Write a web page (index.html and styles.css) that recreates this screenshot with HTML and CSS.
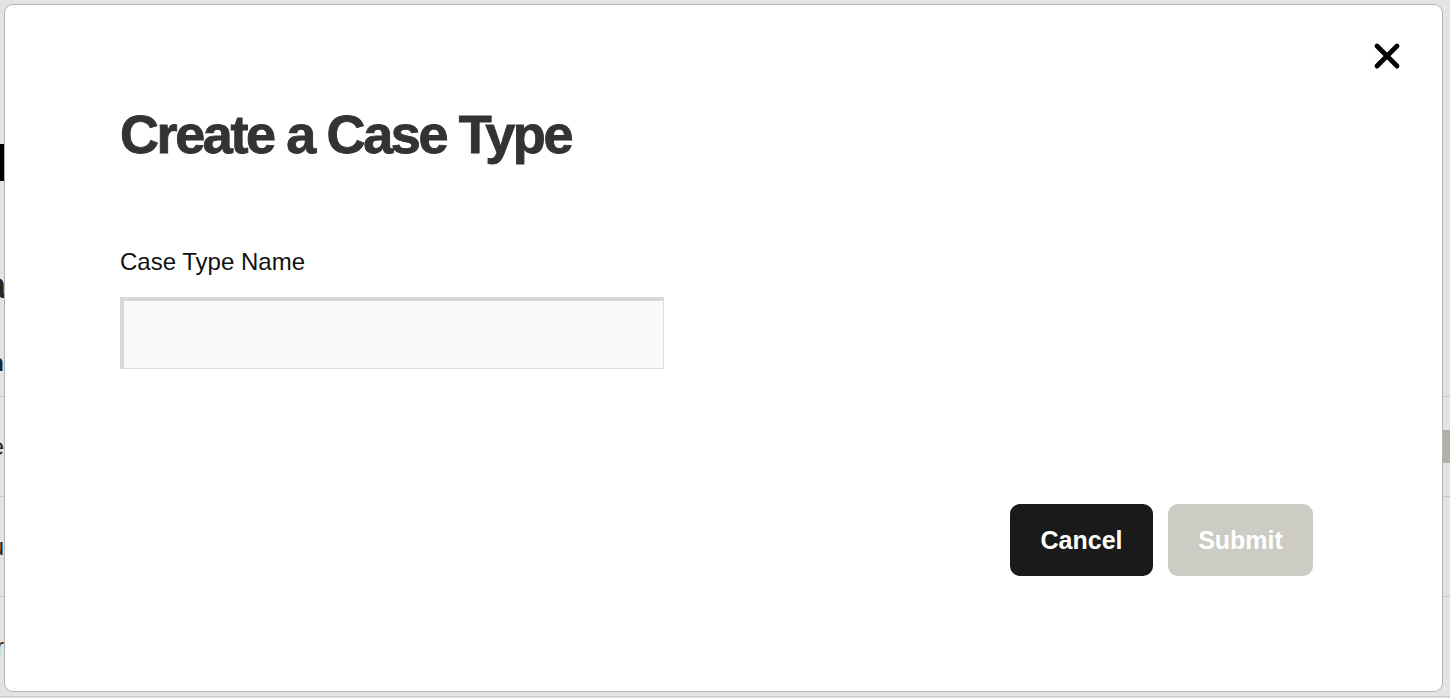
FILE: index.html
```html
<!DOCTYPE html>
<html lang="en">
<head>
<meta charset="utf-8">
<title>Create a Case Type</title>
<link rel="stylesheet" href="styles.css">
</head>
<body>
<div class="page">
  <div class="page-head"><span class="page-bar"></span></div>
  <div class="page-sub">Data</div>
  <div class="page-table">
    <div class="trow thead"><span class="tcell">Column</span></div>
    <div class="trow"><span class="tcell">Case</span><span class="thumb"></span></div>
    <div class="trow"><span class="tcell">Menu</span></div>
    <div class="trow"><span class="tcell">Other</span></div>
  </div>
</div>

<div class="overlay">
  <div class="modal" role="dialog" aria-labelledby="modal-title">
    <button class="close" type="button" aria-label="Close">
      <svg width="28" height="28" viewBox="0 0 28 28" aria-hidden="true">
        <path d="M4 4 L24 24 M24 4 L4 24" stroke="#000" stroke-width="4.8" stroke-linecap="round" fill="none"/>
      </svg>
    </button>
    <h1 id="modal-title" class="modal-title">Create a Case Type</h1>
    <form class="form">
      <label class="field-label" for="ctn">Case Type Name</label>
      <input id="ctn" class="field-input" type="text">
      <div class="actions">
        <button type="button" class="btn btn-cancel">Cancel</button>
        <button type="button" class="btn btn-submit" disabled>Submit</button>
      </div>
    </form>
  </div>
</div>
</body>
</html>
```

FILE: styles.css
```css
* { box-sizing: border-box; }

html, body {
  margin: 0;
  padding: 0;
  width: 1450px;
  height: 698px;
  overflow: hidden;
  background: #ffffff;
  font-family: "Liberation Sans", Arial, sans-serif;
}

/* background page */
.page {
  height: 698px;
  overflow: hidden;
  color: #2a2a2a;
}

.page-head {
  padding-top: 144px;
  display: flex;
}

.page-bar {
  display: block;
  width: 4px;
  height: 37px;
  background: #000;
}

.page-sub {
  margin-top: 84px;
  margin-left: -60px;
  width: 66px;
  direction: rtl;
  overflow: hidden;
  white-space: nowrap;
  text-align: right;
  font-size: 36px;
  font-weight: 700;
  line-height: 42px;
}

.page-table {
  margin-top: 23px;
}

.trow {
  height: 100px;
  display: flex;
  align-items: center;
  justify-content: space-between;
  border-bottom: 1px solid #e0e0e0;
}

.thead {
  height: 67px;
  font-weight: 700;
}

.tcell {
  margin-left: -60px;
  width: 64px;
  text-align: right;
  white-space: nowrap;
  font-size: 24px;
  direction: rtl;
  overflow: hidden;
}

.thumb {
  width: 40px;
  height: 33px;
  background: #c6c6bd;
  border-radius: 3px 0 0 3px;
}

/* overlay + modal */
.overlay {
  position: fixed;
  inset: 0;
  background: rgba(0, 0, 0, 0.11);
  display: flex;
  padding: 4px 7px 6px 4px;
}

.modal {
  position: relative;
  flex: 1;
  background: #ffffff;
  border: 1px solid #b4b4b4;
  border-radius: 9px;
  padding: 99px 129px 0 115px;
  display: flex;
  flex-direction: column;
}

.close {
  position: absolute;
  top: 37px;
  right: 41px;
  width: 28px;
  height: 28px;
  padding: 0;
  border: 0;
  background: transparent;
  cursor: pointer;
  display: flex;
}

.modal-title {
  margin: 0;
  font-size: 54px;
  line-height: 60px;
  font-weight: 700;
  letter-spacing: -2.4px;
  color: #333333;
  -webkit-text-stroke: 0.9px #333333;
}

.form {
  display: flex;
  flex-direction: column;
  align-items: flex-start;
}

.field-label {
  margin-top: 83px;
  font-size: 24px;
  line-height: 29px;
  color: #111;
}

.field-input {
  margin-top: 21px;
  width: 544px;
  height: 72px;
  background: #f9f9f9;
  border-style: solid;
  border-color: #d7d7d7 #dcdcdc #dcdcdc #d7d7d7;
  border-width: 4px 1px 1px 4px;
  font-size: 22px;
  font-family: inherit;
  outline: none;
}

.actions {
  align-self: stretch;
  margin-top: 135px;
  display: flex;
  justify-content: flex-end;
  gap: 15px;
}

.btn {
  height: 72px;
  border: 0;
  border-radius: 10px;
  font-family: inherit;
  font-size: 25px;
  font-weight: 700;
  color: #ffffff;
  padding: 0;
}

.btn-cancel {
  width: 143px;
  background: #1a1a1a;
}

.btn-submit {
  width: 145px;
  background: #cccbc4;
}
```
